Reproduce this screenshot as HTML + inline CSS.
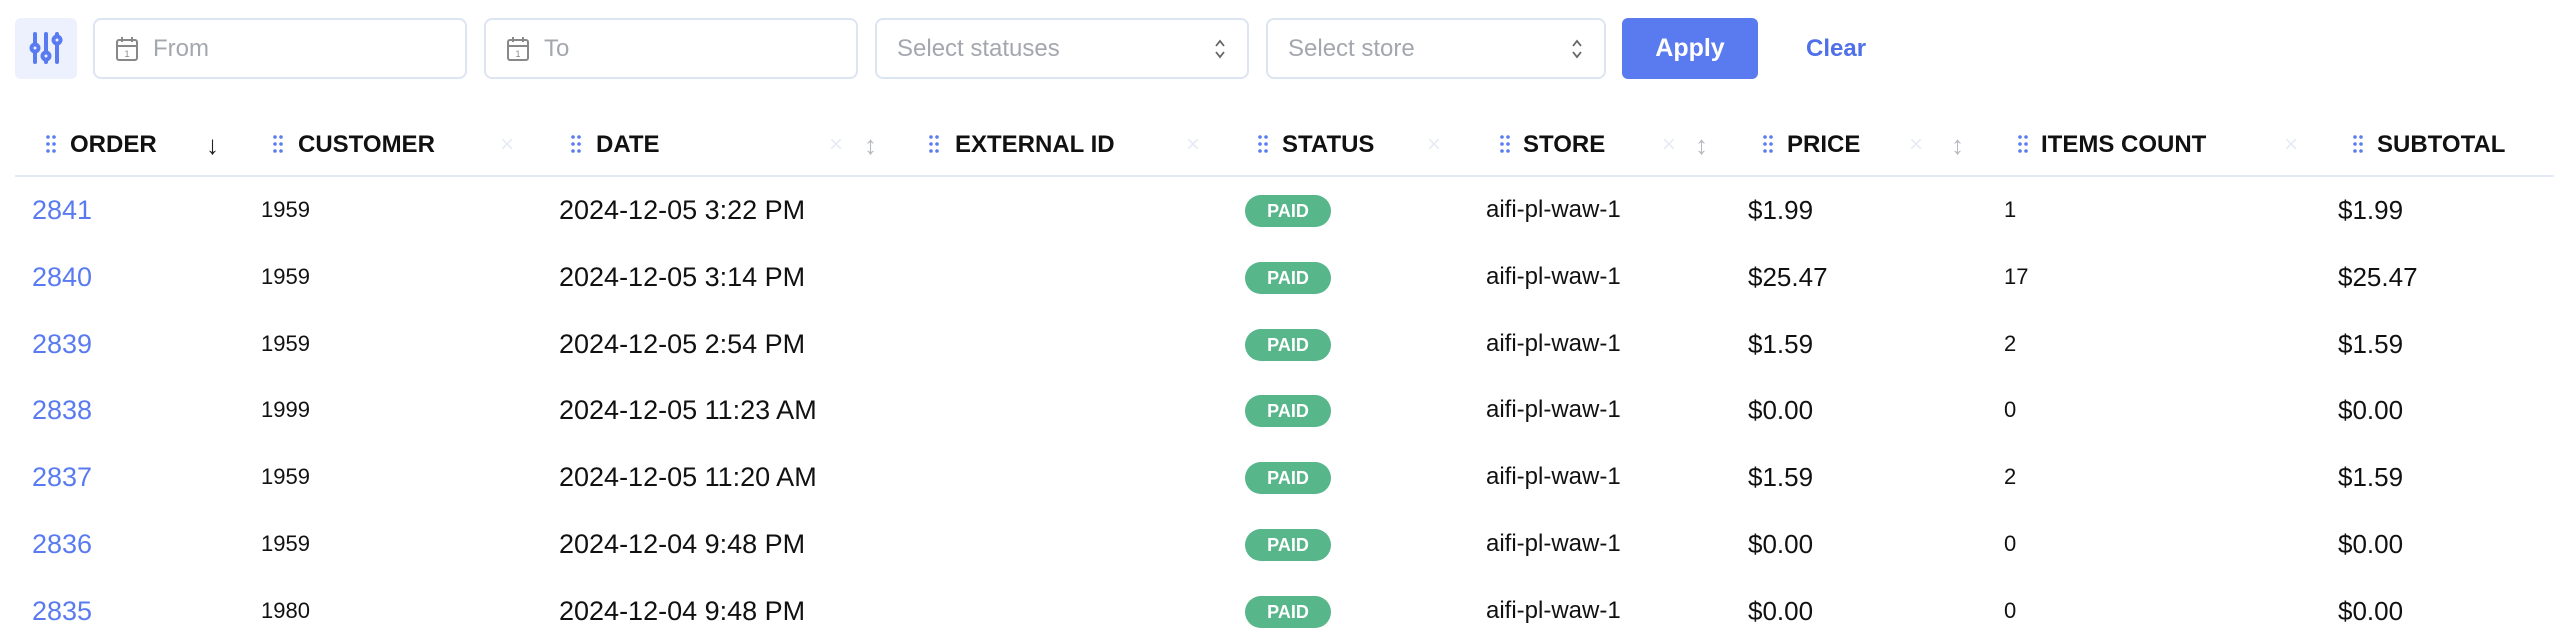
<!DOCTYPE html>
<html><head><meta charset="utf-8"><style>
*{box-sizing:border-box;margin:0;padding:0}
body{width:2554px;height:642px;background:#fff;font-family:"Liberation Sans",sans-serif;position:relative;overflow:hidden;color:#111}
.abs{position:absolute}
.fbtn{left:15px;top:18px;width:62px;height:61px;background:#edf1fd;border-radius:6px}
.inp{top:18px;height:61px;border:2px solid #dde5f2;border-radius:8px;color:#a4a7ad;font-size:24px;line-height:57px}
.apply{left:1622px;top:18px;width:136px;height:61px;background:#5a7bf0;border-radius:6px;color:#fff;font-size:25px;font-weight:bold;text-align:center;line-height:61px}
.clear{left:1806px;top:18px;line-height:61px;color:#4f70e6;font-weight:bold;font-size:24px}
.hd{top:128px;font-size:24px;font-weight:bold;line-height:34px}
.dots{top:135px}
.x{top:130px;color:#e8ecf7;font-size:24px;line-height:30px}
.ud{top:128px;color:#b5b9c0;font-size:26px;line-height:34px}
.line{left:15px;right:0;top:175px;height:2px;background:#e3eaf6}
.c{font-size:26px;line-height:34px}
.badge{width:86px;height:32px;border-radius:16px;background:#57b68a;color:#fff;font-weight:bold;font-size:18px;text-align:center;line-height:32px}
</style></head><body>
<div class="abs fbtn"><svg width="62" height="61" viewBox="0 0 62 61"><g stroke="#5a7bf0" stroke-width="4" fill="none" stroke-linecap="round"><line x1="20" y1="16" x2="20" y2="44"/><line x1="31" y1="16" x2="31" y2="44"/><line x1="42" y1="16" x2="42" y2="44"/><circle cx="20" cy="30" r="3.5" fill="#edf1fd"/><circle cx="31" cy="38" r="3.5" fill="#edf1fd"/><circle cx="42" cy="22" r="3.5" fill="#edf1fd"/></g></svg></div>
<div class="abs inp" style="left:93px;width:374px"><svg class="abs" style="left:20px;top:16px" width="24" height="26" viewBox="0 0 24 26"><g stroke="#888" stroke-width="2" fill="none"><rect x="2" y="4" width="20" height="20" rx="2"/><line x1="2" y1="10" x2="22" y2="10"/><line x1="7" y1="1" x2="7" y2="6"/><line x1="17" y1="1" x2="17" y2="6"/></g><text x="12" y="21" font-size="9" text-anchor="middle" fill="#888">1</text></svg><span class="abs" style="left:58px">From</span></div>
<div class="abs inp" style="left:484px;width:374px"><svg class="abs" style="left:20px;top:16px" width="24" height="26" viewBox="0 0 24 26"><g stroke="#888" stroke-width="2" fill="none"><rect x="2" y="4" width="20" height="20" rx="2"/><line x1="2" y1="10" x2="22" y2="10"/><line x1="7" y1="1" x2="7" y2="6"/><line x1="17" y1="1" x2="17" y2="6"/></g><text x="12" y="21" font-size="9" text-anchor="middle" fill="#888">1</text></svg><span class="abs" style="left:58px">To</span></div>
<div class="abs inp" style="left:875px;width:374px"><span class="abs" style="left:20px">Select statuses</span><svg class="abs" style="right:20px;top:18px" width="14" height="22" viewBox="0 0 14 22"><path d="M3 8l4-5 4 5M3 14l4 5 4-5" stroke="#666" stroke-width="1.8" fill="none"/></svg></div>
<div class="abs inp" style="left:1266px;width:340px"><span class="abs" style="left:20px">Select store</span><svg class="abs" style="right:20px;top:18px" width="14" height="22" viewBox="0 0 14 22"><path d="M3 8l4-5 4 5M3 14l4 5 4-5" stroke="#666" stroke-width="1.8" fill="none"/></svg></div>
<div class="abs apply">Apply</div>
<div class="abs clear">Clear</div>

<div id="hdr"></div>
<div class="abs hd" style="left:70px">ORDER</div><div class="abs ud" style="left:206px;color:#222">↓</div>
<div class="abs hd" style="left:298px">CUSTOMER</div><div class="abs x" style="left:500px">×</div>
<div class="abs hd" style="left:596px">DATE</div><div class="abs x" style="left:829px">×</div><div class="abs ud" style="left:864px">↕</div>
<div class="abs hd" style="left:955px">EXTERNAL ID</div><div class="abs x" style="left:1186px">×</div>
<div class="abs hd" style="left:1282px">STATUS</div><div class="abs x" style="left:1427px">×</div>
<div class="abs hd" style="left:1523px">STORE</div><div class="abs x" style="left:1662px">×</div><div class="abs ud" style="left:1695px">↕</div>
<div class="abs hd" style="left:1787px">PRICE</div><div class="abs x" style="left:1909px">×</div><div class="abs ud" style="left:1951px">↕</div>
<div class="abs hd" style="left:2041px">ITEMS COUNT</div><div class="abs x" style="left:2284px">×</div>
<div class="abs hd" style="left:2377px">SUBTOTAL</div>
<div class="abs line"></div>

<div id="rows"></div>
<script>
var dx=[46,273,571,929,1258,1500,1763,2018,2353],s="";
dx.forEach(function(x){s+='<svg class="abs dots" style="left:'+x+'px" width="10" height="18" viewBox="0 0 10 18"><g fill="#5b7cf0"><circle cx="2" cy="2" r="1.8"/><circle cx="8" cy="2" r="1.8"/><circle cx="2" cy="9" r="1.8"/><circle cx="8" cy="9" r="1.8"/><circle cx="2" cy="16" r="1.8"/><circle cx="8" cy="16" r="1.8"/></g></svg>';});
document.getElementById("hdr").innerHTML=s;
var d=[["2841","1959","2024-12-05 3:22 PM","$1.99","1"],["2840","1959","2024-12-05 3:14 PM","$25.47","17"],["2839","1959","2024-12-05 2:54 PM","$1.59","2"],["2838","1999","2024-12-05 11:23 AM","$0.00","0"],["2837","1959","2024-12-05 11:20 AM","$1.59","2"],["2836","1959","2024-12-04 9:48 PM","$0.00","0"],["2835","1980","2024-12-04 9:48 PM","$0.00","0"]];
var h="";d.forEach(function(r,i){var y=210+i*66.8-17;
h+='<div class="abs c" style="left:32px;top:'+y+'px;color:#5a7bf0;font-size:27px">'+r[0]+'</div>';
h+='<div class="abs c" style="left:261px;top:'+y+'px;font-size:22px">'+r[1]+'</div>';
h+='<div class="abs c" style="left:559px;top:'+y+'px;font-size:27px">'+r[2]+'</div>';
h+='<div class="abs badge" style="left:1245px;top:'+(y+2)+'px">PAID</div>';
h+='<div class="abs c" style="left:1486px;top:'+y+'px;font-size:24px">aifi-pl-waw-1</div>';
h+='<div class="abs c" style="left:1748px;top:'+y+'px">'+r[3]+'</div>';
h+='<div class="abs c" style="left:2004px;top:'+y+'px;font-size:22px">'+r[4]+'</div>';
h+='<div class="abs c" style="left:2338px;top:'+y+'px">'+r[3]+'</div>';});
document.getElementById("rows").innerHTML=h;
</script>
</body></html>
